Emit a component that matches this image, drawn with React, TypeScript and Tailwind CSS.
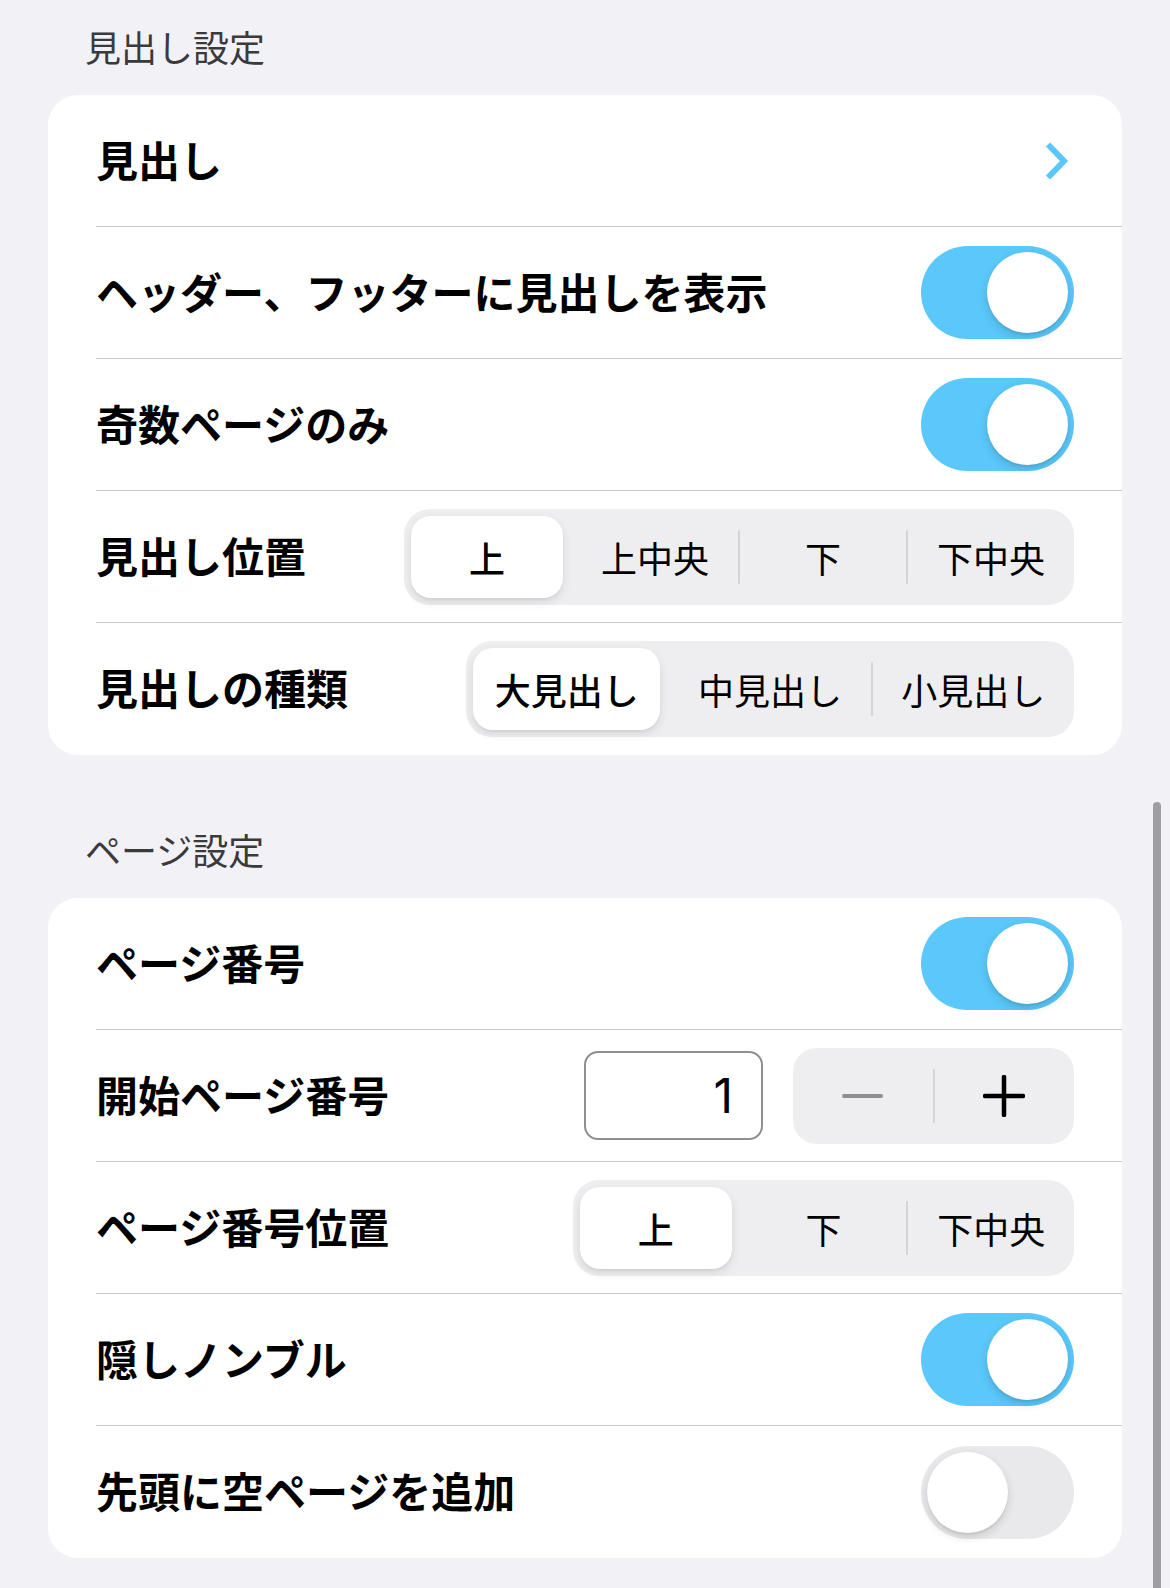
import React from "react";

const jp = { fontFamily: '"Noto Sans CJK JP", "Noto Sans", sans-serif' };

const Toggle = ({ on }: { on: boolean }) => (
  <div
    className={`w-[153px] h-[93px] rounded-full p-[6px] flex ${on ? "bg-[#5ac8fa] justify-end" : "bg-[#e9e9eb] justify-start"}`}
  >
    <div className="w-[81px] h-[81px] rounded-full bg-white shadow-[0_4px_10px_rgba(0,0,0,0.14),0_2px_2px_rgba(0,0,0,0.06)]" />
  </div>
);

const Segmented = ({ items, selected, width }: { items: string[]; selected: number; width: string }) => (
  <div className={`${width} h-[96px] rounded-[26px] bg-[#eeeef0] flex items-center`}>
    {items.map((item, i) => (
      <React.Fragment key={item}>
        {i > 0 && (
          <div
            className={`w-[2px] h-[54px] shrink-0 rounded-full ${i === selected || i - 1 === selected ? "bg-transparent" : "bg-[#d4d4d8]"}`}
          />
        )}
        <div className="flex-1 h-full p-[7px]">
          <div
            className={`h-full w-full flex items-center justify-center text-[36px] leading-none text-black ${
              i === selected
                ? "bg-white rounded-[20px] font-medium shadow-[0_4px_10px_rgba(0,0,0,0.10),0_2px_2px_rgba(0,0,0,0.04)]"
                : "font-normal"
            }`}
          >
            {item}
          </div>
        </div>
      </React.Fragment>
    ))}
  </div>
);

const Stepper = () => (
  <div className="flex items-center gap-[30px]">
    <div className="w-[179px] h-[89px] border-2 border-[#8e8e93] rounded-[14px] flex items-center justify-end pr-[28px]">
      <span className="text-[48px] leading-none text-black" style={{ fontFamily: "Inter, sans-serif" }}>
        1
      </span>
    </div>
    <div className="w-[281px] h-[96px] rounded-[24px] bg-[#eeeef0] flex items-center">
      <div className="flex-1 flex items-center justify-center">
        <div className="w-[41px] h-[4px] rounded-full bg-[#8e8e93]" />
      </div>
      <div className="w-[2px] h-[54px] bg-[#d4d4d8] rounded-full" />
      <div className="flex-1 flex items-center justify-center">
        <svg width="42" height="42" viewBox="0 0 42 42">
          <path d="M21 2v38M2 21h38" stroke="#000" strokeWidth="4.5" strokeLinecap="round" />
        </svg>
      </div>
    </div>
  </div>
);

const Chevron = () => (
  <svg width="28" height="40" viewBox="0 0 28 40" className="mr-[3px]">
    <path d="M5 3.5 L21 20 L5 36.5" fill="none" stroke="#5ac8fa" strokeWidth="6" />
  </svg>
);

type Row = { label: string; right: React.ReactNode };

const Card = ({ rows }: { rows: Row[] }) => (
  <div className="bg-white rounded-[30px] overflow-hidden">
    {rows.map((row, i) => (
      <div key={row.label} className="pl-[48px]">
        <div
          className={`h-[132px] pr-[48px] flex items-center justify-between ${i < rows.length - 1 ? "border-b border-[#c8c8cc]" : ""}`}
        >
          <span className="text-[42px] leading-none font-bold text-black -translate-y-[2px]">{row.label}</span>
          {row.right}
        </div>
      </div>
    ))}
  </div>
);

const SectionHeader = ({ title }: { title: string }) => (
  <div className="pl-[37px] h-[42px] text-[36px] leading-[42px] text-[#3a3a3c] -translate-y-[1px]">{title}</div>
);

export default function App() {
  return (
    <div className="relative w-full min-h-[1588px] bg-[#f2f1f6] overflow-hidden" style={jp}>
      <div className="px-[48px] pt-[26px]">
        <SectionHeader title="見出し設定" />
        <div className="mt-[27px]">
          <Card
            rows={[
              { label: "見出し", right: <Chevron /> },
              { label: "ヘッダー、フッターに見出しを表示", right: <Toggle on /> },
              { label: "奇数ページのみ", right: <Toggle on /> },
              {
                label: "見出し位置",
                right: <Segmented width="w-[670px]" items={["上", "上中央", "下", "下中央"]} selected={0} />,
              },
              {
                label: "見出しの種類",
                right: <Segmented width="w-[608px]" items={["大見出し", "中見出し", "小見出し"]} selected={0} />,
              },
            ]}
          />
        </div>

        <div className="mt-[74px]">
          <SectionHeader title="ページ設定" />
        </div>
        <div className="mt-[27px]">
          <Card
            rows={[
              { label: "ページ番号", right: <Toggle on /> },
              { label: "開始ページ番号", right: <Stepper /> },
              {
                label: "ページ番号位置",
                right: <Segmented width="w-[501px]" items={["上", "下", "下中央"]} selected={0} />,
              },
              { label: "隠しノンブル", right: <Toggle on /> },
              { label: "先頭に空ページを追加", right: <Toggle on={false} /> },
            ]}
          />
        </div>
      </div>

      {/* scroll indicator */}
      <div className="absolute right-[9px] top-[802px] bottom-0 w-[8px] rounded-t-full bg-[#9e9ea3]" />
    </div>
  );
}
